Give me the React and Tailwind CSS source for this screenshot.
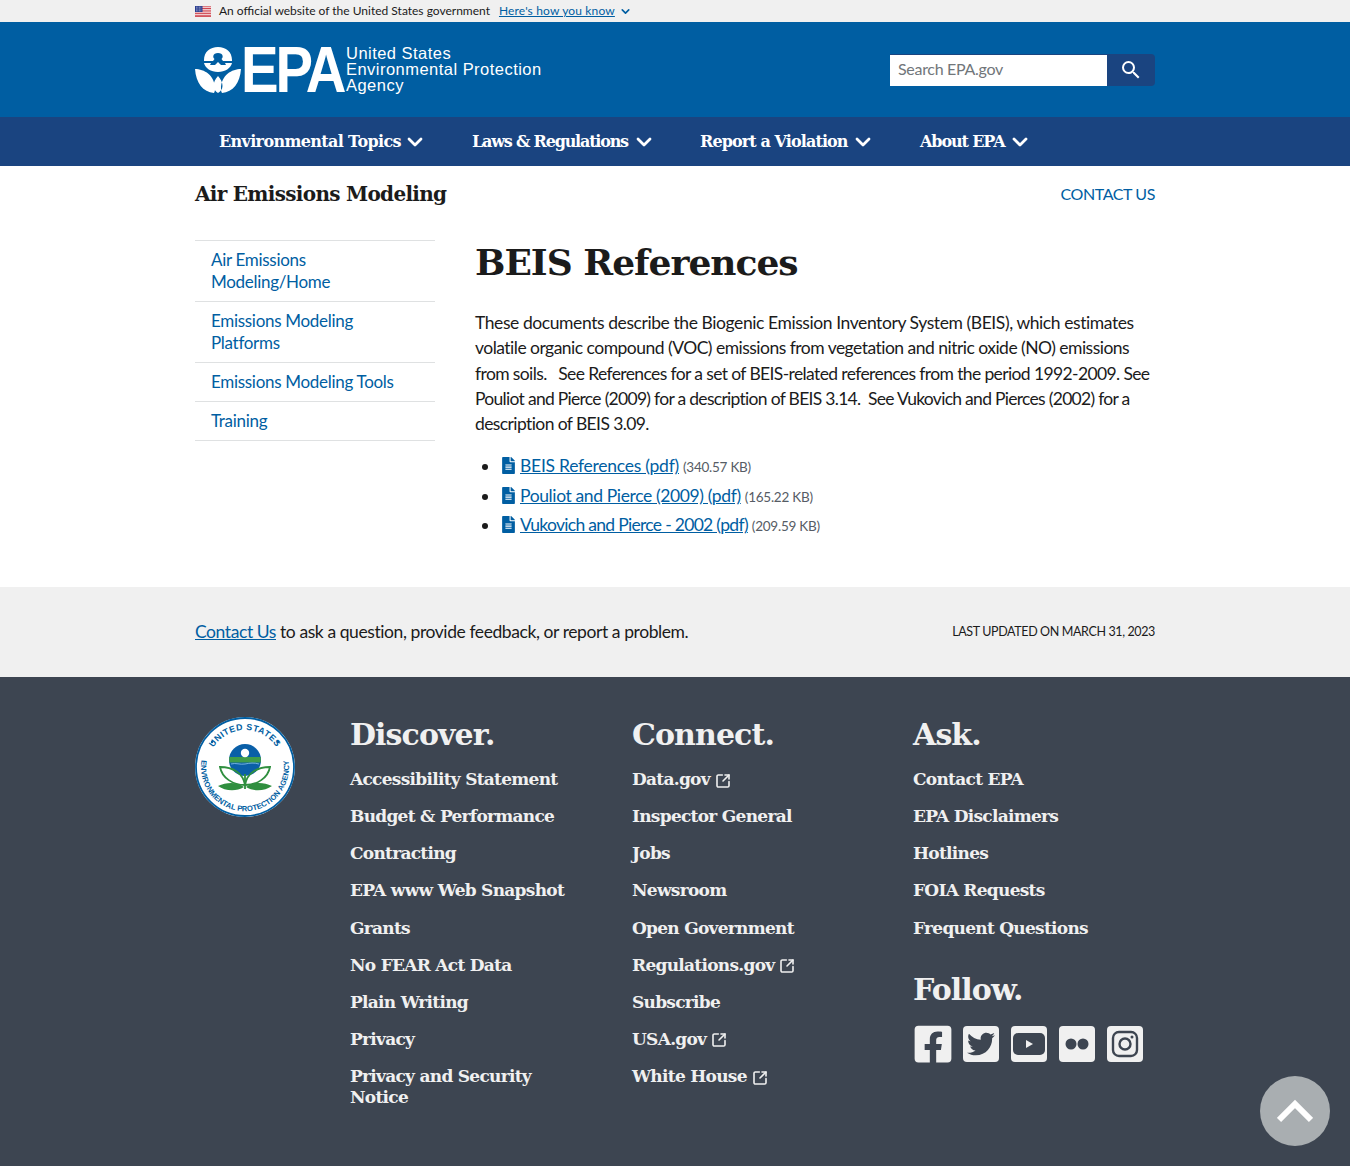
import { ChevronDown, SquareArrowOutUpRight } from "lucide-react";
import { MdSearch } from "react-icons/md";
import { FaFacebookSquare, FaFileAlt, FaTwitter } from "react-icons/fa";

const SERIF = { fontFamily: '"DejaVu Serif", serif' };

const navItems = [
    { label: "Environmental Topics", w: "w-[253px]", textW: "w-[181px] tracking-[-0.65px]" },
    { label: "Laws & Regulations", w: "w-[228px]", textW: "w-[157px] tracking-[-1.2px]" },
    { label: "Report a Violation", w: "w-[220px]", textW: "w-[148px] tracking-[-0.9px]" },
    { label: "About EPA", w: "w-[140px]", textW: "w-[85px] tracking-[-1.1px]" },
];

const sideItems = ["Air Emissions\nModeling/Home", "Emissions Modeling\nPlatforms", "Emissions Modeling Tools", "Training"];

const introLines = [
    { text: "These documents describe the Biogenic Emission Inventory System (BEIS), which estimates", cls: "tracking-[-0.42px]" },
    { text: "volatile organic compound (VOC) emissions from vegetation and nitric oxide (NO) emissions", cls: "tracking-[-0.52px]" },
    { text: "from soils.\u00a0\u00a0 See References for a set of BEIS-related references from the period 1992-2009. See", cls: "tracking-[-0.62px]" },
    { text: "Pouliot and Pierce (2009) for a description of BEIS 3.14.\u00a0 See Vukovich and Pierces (2002) for a", cls: "tracking-[-0.71px]" },
    { text: "description of BEIS 3.09.", cls: "tracking-[-0.6px]" },
];

const docs = [
    { label: "BEIS References (pdf)", size: "(340.57 KB)", cls: "tracking-[-0.26px]" },
    { label: "Pouliot and Pierce (2009) (pdf)", size: "(165.22 KB)", cls: "tracking-[-0.38px]" },
    { label: "Vukovich and Pierce - 2002 (pdf)", size: "(209.59 KB)", cls: "tracking-[-0.7px]" },
];

const discover = ["Accessibility Statement", "Budget & Performance", "Contracting", "EPA www Web Snapshot", "Grants", "No FEAR Act Data", "Plain Writing", "Privacy", "Privacy and Security\nNotice"];
const connect = [["Data.gov", true], ["Inspector General"], ["Jobs"], ["Newsroom"], ["Open Government"], ["Regulations.gov", true], ["Subscribe"], ["USA.gov", true], ["White House", true]];
const ask = ["Contact EPA", "EPA Disclaimers", "Hotlines", "FOIA Requests", "Frequent Questions"];

function Flag() {
    return (
        <svg width="16" height="11" viewBox="0 0 16 11" className="shrink-0">
            <rect width="16" height="11" fill="#fff" />
            <path d="M0 .8h16M0 2.5h16M0 4.2h16M0 5.9h16M0 7.6h16M0 9.3h16M0 10.6h16" stroke="#c8303c" strokeWidth="0.9" />
            <rect width="7.5" height="6" fill="#2a3d8f" />
            <path d="M1 1.2h6M1 3h6M1 4.8h6" stroke="#fff" strokeWidth="0.6" strokeDasharray="0.8 0.7" />
        </svg>
    );
}

function Logo() {
    return (
        <div className="flex items-center">
            <svg width="46" height="46" viewBox="0 0 46 46" className="shrink-0">
                <path fill="#fff" fillRule="evenodd" d="M9 13C9 5 15 0 23 0s14 5 14 13l0 1H28l-1.500-2c2-1.500 2-6-3.500-6s-5.500 4.500-3.500 6L18 14H9zM9 16h7l-1 2h5l3-3 3 3h5l-1-2h7c-1 5-7 9-14 9S10 21 9 16z" />
                <path fill="#fff" d="M0 22c9 0 20 6 20 20 0 2-.5 3-1 4C8 45 1 36 0 22zM46 22c-9 0-20 6-20 20 0 2 .5 3 1 4 11-1 18-10 19-24zM23 29c3 3 4.500 7 4.500 10 0 3-2 5.500-4.500 7-2.500-1.500-4.500-4-4.500-7 0-3 1.500-7 4.500-10z" />
            </svg>
            <div className="w-[105px] h-[46px]">
                <span className="block origin-left scale-x-[0.88] text-[64px] leading-[46px] font-bold text-white tracking-[-3.5px]" style={{ fontFamily: '"Liberation Sans", sans-serif' }}>EPA</span>
            </div>
            <div className="text-white text-[16.500px] leading-[16px] tracking-[0.47px] whitespace-nowrap -mt-[1px]" style={{ fontFamily: '"Liberation Sans", sans-serif' }}>
                <div>United States</div>
                <div>Environmental Protection</div>
                <div>Agency</div>
            </div>
        </div>
    );
}

function Seal() {
    return (
        <svg width="100" height="100" viewBox="0 0 100 100" className="shrink-0">
            <defs>
                <path id="sealTop" d="M 13 50 A 37 37 0 0 1 87 50" />
                <path id="sealBottom" d="M 8.700 35 A 44 44 0 1 0 91.300 35" />
            </defs>
            <circle cx="50" cy="50" r="50" fill="#fff" />
            <circle cx="50" cy="50" r="49" fill="none" stroke="#005ea2" strokeWidth="1.800" />
            <text fontSize="8.800" fontWeight="700" fill="#005ea2" fontFamily="Liberation Sans, sans-serif" letterSpacing="0.5">
                <textPath href="#sealTop" startOffset="50%" textAnchor="middle">UNITED STATES</textPath>
            </text>
            <text fontSize="7.600" fontWeight="700" fill="#005ea2" fontFamily="Liberation Sans, sans-serif" letterSpacing="0">
                <textPath href="#sealBottom" startOffset="50%" textAnchor="middle">ENVIRONMENTAL PROTECTION AGENCY</textPath>
            </text>
            <circle cx="50" cy="43" r="16" fill="#0a5fa8" />
            <path d="M34.200 40h31.600v5.500h-31.600z" fill="#3f9c4a" />
            <path d="M36 47c5-1.500 9 1 14 0s9-1.500 14 0" stroke="#8ec6e8" strokeWidth="0.8" fill="none" />
            <circle cx="50" cy="36" r="4.200" fill="#fff" />
            <path d="M50 57v15" stroke="#2f8f3f" strokeWidth="1.800" />
            <path d="M50 68C48 56 38 50 25 50c2 11 13 18 25 18zM50 68c2-12 12-18 25-18-2 11-13 18-25 18z" fill="none" stroke="#2f8f3f" strokeWidth="1.800" />
            <path d="M49 70c-7-5-17-5-26-1 7 5 18 6 26 1zM51 70c7-5 17-5 26-1-7 5-18 6-26 1z" fill="#2f8f3f" />
            <circle cx="17" cy="25" r="1.200" fill="#005ea2" />
            <circle cx="83" cy="25" r="1.200" fill="#005ea2" />
        </svg>
    );
}

function Heading({ children, className = "" }) {
    return <h2 className={`text-[30px] leading-[36px] font-bold text-[#f0f0f0] tracking-[-0.9px] ${className}`} style={SERIF}>{children}</h2>;
}

function FooterLink({ label, external }) {
    return (
        <a className="flex items-center text-[17px] leading-[21px] font-bold text-[#f0f0f0] tracking-[-0.72px] whitespace-pre-line mb-[16.150px]" style={SERIF}>
            <span>{label}</span>
            {external && <SquareArrowOutUpRight size={16} strokeWidth={2.400} className="ml-[5px] mt-[2px] text-[#f0f0f0]" />}
        </a>
    );
}

function SocialBox({ children }) {
    return <div className="w-9 h-9 rounded-[4px] bg-[#f0f0f0] flex items-center justify-center overflow-hidden">{children}</div>;
}

export default function App() {
    return (
        <div className="relative h-[1166px] overflow-hidden bg-white text-[#1b1b1b]" style={{ fontFamily: "Lato, sans-serif" }}>
            {/* gov banner */}
            <div className="bg-[#f0f0f0] h-[22px]">
                <div className="w-[960px] mx-auto flex items-center h-[22px] text-[12px]">
                    <Flag />
                    <span className="ml-2">An official website of the United States government</span>
                    <a className="ml-[9px] text-[#005ea2] underline tracking-[0.15px]">Here's how you know</a>
                    <ChevronDown size={13} strokeWidth={3} className="ml-[4px] text-[#005ea2]" />
                </div>
            </div>

            {/* header */}
            <header className="bg-[#005ea2] h-[95px]">
                <div className="w-[960px] mx-auto h-full flex items-center justify-between">
                    <Logo />
                    <div className="flex h-[32px] w-[265px]">
                        <div className="bg-white flex-1 flex items-center pl-2 pb-[2px] text-[16px] tracking-[-0.3px] text-[#71767a] border-t border-[#1a4480]">Search EPA.gov</div>
                        <div className="w-[48px] bg-[#1a4480] rounded-r-[4px] flex items-center justify-center">
                            <MdSearch size={24} className="text-white" />
                        </div>
                    </div>
                </div>
            </header>

            {/* main nav */}
            <nav className="bg-[#1a4480] h-[49px]">
                <div className="w-[960px] mx-auto h-full flex items-center pl-6">
                    {navItems.map((item) => (
                        <div key={item.label} className={`${item.w} flex items-center text-white text-[16px] font-bold`} style={SERIF}>
                            <span className={`${item.textW} whitespace-nowrap`}>{item.label}</span>
                            <ChevronDown size={24} strokeWidth={2.800} className="ml-[3px]" />
                        </div>
                    ))}
                </div>
            </nav>

            {/* page title row */}
            <div className="w-[960px] mx-auto flex items-center justify-between h-[56px]">
                <div className="text-[20px] font-bold tracking-[-0.7px]" style={SERIF}>Air Emissions Modeling</div>
                <a className="text-[#005ea2] text-[16px] tracking-[-0.4px]">CONTACT US</a>
            </div>

            {/* content */}
            <div className="w-[960px] mx-auto flex gap-10 pt-[18px] h-[365px]">
                <ul className="w-[240px] border-t border-[#dfe1e2] self-start text-[17px] leading-[22px] tracking-[-0.3px] text-[#005ea2]">
                    {sideItems.map((item) => (
                        <li key={item} className="border-b border-[#dfe1e2] pl-4 py-2 whitespace-pre-line">{item}</li>
                    ))}
                </ul>
                <main className="w-[680px]">
                    <h1 className="text-[36px] leading-[44px] font-bold tracking-[-1px]" style={SERIF}>BEIS References</h1>
                    <p className="mt-[26px] text-[17.500px] leading-[25.300px]">
                        {introLines.map((line) => (
                            <span key={line.text} className={`block whitespace-nowrap ${line.cls}`}>{line.text}</span>
                        ))}
                    </p>
                    <ul className="list-disc pl-[25px] mt-[17px] text-[17.500px] leading-[25px]">
                        {docs.map((d) => (
                            <li key={d.label} className="h-[29.500px]">
                                <FaFileAlt size={17} className="inline align-[-2px] text-[#005ea2] mr-[3px]" />
                                <a className={`text-[#005ea2] underline ${d.cls}`}>{d.label}</a>
                                <span className="text-[13.500px] tracking-[-0.25px] text-[#565c65] ml-[4px]">{d.size}</span>
                            </li>
                        ))}
                    </ul>
                </main>
            </div>

            {/* contact band */}
            <div className="bg-[#f0f0f0] h-[90px]">
                <div className="w-[960px] mx-auto h-full flex items-center justify-between">
                    <p className="text-[17.500px] tracking-[-0.42px]"><a className="text-[#005ea2] underline">Contact Us</a> to ask a question, provide feedback, or report a problem.</p>
                    <p className="text-[12.500px] tracking-[-0.37px]">LAST UPDATED ON MARCH 31, 2023</p>
                </div>
            </div>

            {/* footer */}
            <footer className="bg-[#3d4551] h-[489px]">
                <div className="w-[960px] mx-auto flex pt-[40px]">
                    <div className="w-[155px]"><Seal /></div>
                    <div className="w-[282px]">
                        <Heading className="mb-[16px]">Discover.</Heading>
                        {discover.map((l) => <FooterLink key={l} label={l} />)}
                    </div>
                    <div className="w-[281px]">
                        <Heading className="mb-[16px]">Connect.</Heading>
                        {connect.map(([l, ext]) => <FooterLink key={l} label={l} external={ext} />)}
                    </div>
                    <div>
                        <Heading className="mb-[16px]">Ask.</Heading>
                        {ask.map((l) => <FooterLink key={l} label={l} />)}
                        <Heading className="mt-[33px] mb-[18px]">Follow.</Heading>
                        <div className="flex gap-3 pl-[2px]">
                            <FaFacebookSquare size={42} className="text-[#f0f0f0] -m-[3px]" />
                            <SocialBox><FaTwitter size={28} className="text-[#3d4551]" /></SocialBox>
                            <SocialBox>
                                <svg width="32" height="22" viewBox="0 0 32 22">
                                    <rect width="32" height="22" rx="5" fill="#3d4551" />
                                    <path d="M13 7l7 4-7 4z" fill="#f0f0f0" />
                                </svg>
                            </SocialBox>
                            <SocialBox>
                                <svg width="24" height="12" viewBox="0 0 24 12">
                                    <circle cx="6" cy="6" r="5.500" fill="#3d4551" />
                                    <circle cx="18" cy="6" r="5.500" fill="#3d4551" />
                                </svg>
                            </SocialBox>
                            <SocialBox>
                                <svg width="28" height="28" viewBox="0 0 28 28" fill="none" stroke="#3d4551" strokeWidth="2.400">
                                    <rect x="2" y="2" width="24" height="24" rx="6" />
                                    <circle cx="14" cy="14" r="5.500" />
                                    <circle cx="21" cy="7" r="1.500" fill="#3d4551" stroke="none" />
                                </svg>
                            </SocialBox>
                        </div>
                    </div>
                </div>
            </footer>

            {/* back to top */}
            <div className="absolute left-[1260px] top-[1076px] w-[70px] h-[70px] rounded-full bg-[#a9aeb1] flex items-center justify-center">
                <svg width="36" height="24" viewBox="0 0 36 24" fill="none" stroke="#fff" strokeWidth="6">
                    <path d="M2 21L18 5l16 16" />
                </svg>
            </div>
        </div>
    );
}
